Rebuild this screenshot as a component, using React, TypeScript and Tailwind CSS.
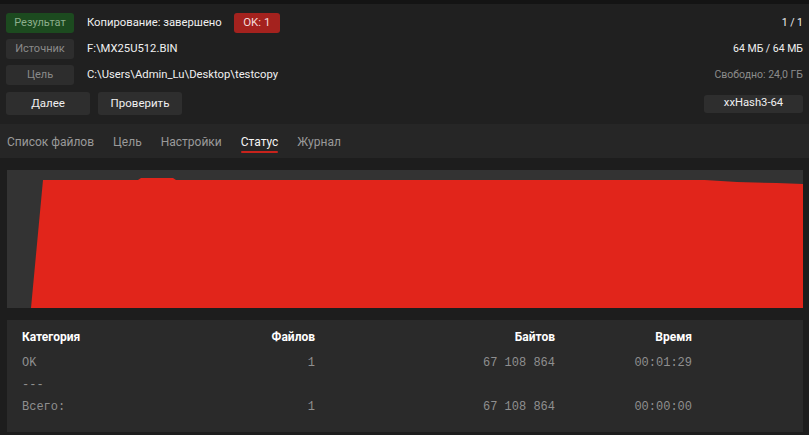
import React from "react";

const ui = { fontFamily: 'Roboto, "Noto Sans", sans-serif' };
const mono = { fontFamily: '"Liberation Mono", "DejaVu Sans Mono", monospace' };

function Label({ children, green }: { children: React.ReactNode; green?: boolean }) {
  return (
    <div
      className={`w-[68px] h-[20px] rounded-[3px] flex items-center justify-center text-[11px] ${
        green ? "bg-[#1c4a1f] text-[#8cae8c]" : "bg-[#2d2d2d] text-[#8a8a8a]"
      }`}
    >
      {children}
    </div>
  );
}

const tabs = ["Список файлов", "Цель", "Настройки", "Статус", "Журнал"];

const rows = [
  { cat: "OK", files: "1", bytes: "67 108 864", time: "00:01:29" },
  { cat: "---", files: "", bytes: "", time: "" },
  { cat: "Всего:", files: "1", bytes: "67 108 864", time: "00:00:00" },
];

export default function App() {
  return (
    <div className="w-[809px] h-[435px] bg-[#1d1d1d] flex flex-col overflow-hidden" style={ui}>
      <div className="h-[4px] bg-[#141414]" />

      {/* Header */}
      <div className="bg-[#202020] flex justify-between pl-[6px] pr-[6px] pt-[9px] pb-[9px]">
        <div className="flex flex-col gap-[6px]">
          <div className="flex items-center">
            <Label green>Результат</Label>
            <span className="ml-[13px] text-[11.25px] text-[#f0f0f0]">Копирование: завершено</span>
            <div className="ml-[12px] w-[46px] h-[20px] rounded-[3px] bg-[#a4221e] text-[#f3dada] text-[11.5px] flex items-center justify-center">
              OK: 1
            </div>
          </div>
          <div className="flex items-center">
            <Label>Источник</Label>
            <span className="ml-[13px] text-[11.25px] text-[#f0f0f0]">F:\MX25U512.BIN</span>
          </div>
          <div className="flex items-center">
            <Label>Цель</Label>
            <span className="ml-[13px] text-[11.25px] text-[#f0f0f0]">C:\Users\Admin_Lu\Desktop\testcopy</span>
          </div>
          <div className="flex items-center gap-[8px] mt-[1px]">
            <button className="w-[84px] h-[23px] rounded-[3px] bg-[#2e2e2e] text-[11.5px] text-[#f0f0f0]">Далее</button>
            <button className="w-[84px] h-[23px] rounded-[3px] bg-[#2e2e2e] text-[11.5px] text-[#f0f0f0]">Проверить</button>
          </div>
        </div>

        <div className="flex flex-col items-end gap-[6px]">
          <div className="h-[20px] flex items-center text-[10.5px] text-[#f0f0f0]">1 / 1</div>
          <div className="h-[20px] flex items-center text-[10.5px] text-[#f0f0f0]">64 МБ / 64 МБ</div>
          <div className="h-[20px] flex items-center text-[10.5px] text-[#8c8c8c]">Свободно: 24,0 ГБ</div>
          <div className="h-[23px] flex items-center mt-[1px]">
            <div className="w-[99px] h-[18px] rounded-[3px] bg-[#2e2e2e] text-[11.25px] text-[#f0f0f0] flex items-center justify-center">
              xxHash3-64
            </div>
          </div>
        </div>
      </div>

      {/* Tabs */}
      <div className="h-[34px] bg-[#262626] flex items-center gap-[19px] px-[7px]">
        {tabs.map((t) => (
          <div key={t} className="relative h-full flex items-center pt-[2px]">
            <span className={`text-[12px] ${t === "Статус" ? "text-[#f5f5f5]" : "text-[#9a9a9a]"}`}>{t}</span>
            {t === "Статус" && <div className="absolute left-0 right-0 bottom-[5px] h-[2px] bg-[#c8231c] rounded-full" />}
          </div>
        ))}
      </div>

      {/* Content */}
      <div className="flex flex-col gap-[12px] pl-[7px] pr-[6px] pt-[12px]">
        <div className="h-[138px] bg-[#333333]">
          <svg width="796" height="138" viewBox="0 0 796 138" className="block">
            <polygon
              points="24,138 36,10 131,10 134,8 166,8 169,10 698,10 730,12 770,13 796,14 796,138"
              fill="#e1251b"
            />
          </svg>
        </div>

        <div className="h-[112px] bg-[#2a2a2a] px-[15px] pt-[6px]">
          <div className="grid grid-cols-[200px_93px_240px_137px] h-[22px] items-center text-[12px] font-bold text-white mb-[4px]">
            <div>Категория</div>
            <div className="text-right">Файлов</div>
            <div className="text-right">Байтов</div>
            <div className="text-right">Время</div>
          </div>
          {rows.map((r, i) => (
            <div
              key={i}
              className="grid grid-cols-[200px_93px_240px_137px] h-[22px] items-center text-[12px] text-[#8f8f8f]"
              style={mono}
            >
              <div>{r.cat}</div>
              <div className="text-right">{r.files}</div>
              <div className="text-right">{r.bytes}</div>
              <div className="text-right">{r.time}</div>
            </div>
          ))}
        </div>
      </div>
    </div>
  );
}
